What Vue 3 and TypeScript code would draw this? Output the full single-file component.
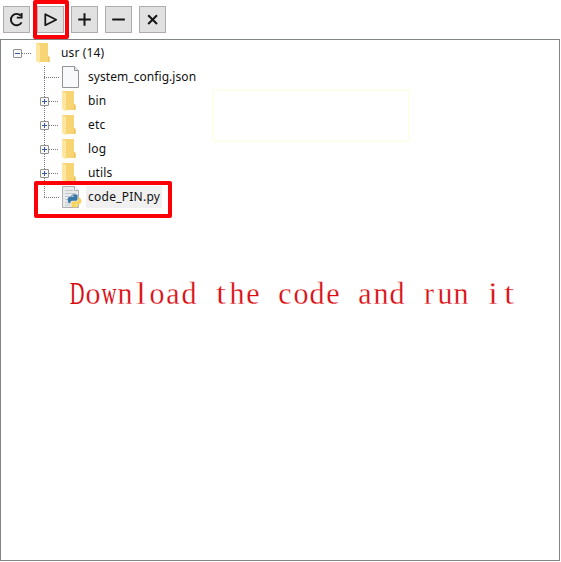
<script setup lang="ts">
interface Item {
  name: string
  kind: 'file' | 'folder' | 'python'
}

const tools = ['reload', 'run', 'add', 'remove', 'close']
const note = [...'Download the code and run it']
const items: Item[] = [
  { name: 'system_config.json', kind: 'file' },
  { name: 'bin', kind: 'folder' },
  { name: 'etc', kind: 'folder' },
  { name: 'log', kind: 'folder' },
  { name: 'utils', kind: 'folder' },
  { name: 'code_PIN.py', kind: 'python' },
]
</script>

<template>
  <main class="window">
    <header class="toolbar">
      <button v-for="tool in tools" :key="tool" class="tool" :aria-label="tool">
        <svg viewBox="0 0 25 25" width="25" height="25">
          <g v-if="tool === 'reload'" fill="none" stroke="#161616" stroke-width="1.9">
            <path d="M17.600 15.400A5.700 5.700 0 1 1 16.800 8.700" />
            <path d="M17.600 6v4.600h-4.800" />
          </g>
          <path v-else-if="tool === 'run'" d="M7.300 7.200v11L18.200 12.700z" fill="none" stroke="#161616" stroke-width="1.800" stroke-linejoin="round" />
          <path v-else-if="tool === 'add'" d="M6.200 12.500h12.600M12.500 6.200v12.600" stroke="#161616" stroke-width="2" />
          <path v-else-if="tool === 'remove'" d="M6.200 12.500h12.600" stroke="#161616" stroke-width="2" />
          <path v-else d="M8.200 8.200l8.800 8.800M17 8.200l-8.800 8.800" stroke="#161616" stroke-width="2" />
        </svg>
        <span v-if="tool === 'run'" class="mark mark-run"></span>
      </button>
    </header>

    <section class="panel">
      <div class="row root">
        <svg class="toggle" viewBox="0 0 9 9" width="9" height="9">
          <rect x=".5" y=".5" width="8" height="8" rx=".5" fill="#f7f7f8" stroke="#919191" />
          <path d="M2 4.500h5" stroke="#3d579b" />
        </svg>
        <span class="dots root-dots"></span>
        <svg class="folder" viewBox="0 0 16 22" width="16" height="22">
          <path d="M1 1h12v13l1.500 1v5H5L1 18z" fill="#f7d575" />
          <path d="M13 14l1.500 1v5H13z" fill="#efc459" />
          <path d="M1 1l4 2v18.500L1 19z" fill="#ffe7a2" />
        </svg>
        <span class="label">usr (14)</span>
      </div>

      <div
        v-for="(item, index) in items"
        :key="item.name"
        class="row child"
        :class="{ last: index === items.length - 1 }"
      >
        <span class="branch">
          <svg v-if="item.kind === 'folder'" class="plus" viewBox="0 0 9 9" width="9" height="9">
            <rect x=".5" y=".5" width="8" height="8" rx=".5" fill="#f7f7f8" stroke="#919191" />
            <path d="M2 4.500h5M4.500 2v5" stroke="#3d579b" />
          </svg>
        </span>
        <span class="dots child-dots" :class="{ leaf: item.kind !== 'folder' }"></span>
        <span class="icon">
          <svg v-if="item.kind === 'folder'" viewBox="0 0 22 22" width="22" height="22">
            <path d="M2 1h12v13l1.500 1v5H6L2 18z" fill="#f7d575" />
            <path d="M14 14l1.500 1v5H14z" fill="#efc459" />
            <path d="M2 1l4 2v18.500L2 19z" fill="#ffe7a2" />
          </svg>
          <svg v-else-if="item.kind === 'file'" viewBox="0 0 22 22" width="22" height="22">
            <path d="M2.500.500h12l4 4v17h-16z" fill="#f8f9fa" stroke="#909294" />
            <path d="M14.500.500v4h4" fill="#e9ebed" stroke="#909294" />
          </svg>
          <svg v-else viewBox="0 0 22 22" width="22" height="22">
            <path d="M2.500.500h12l4 4v17h-16z" fill="#e8eaeb" stroke="#adafb1" />
            <path d="M14.500.500v4h4" fill="#fff" stroke="#adafb1" />
            <path d="M5 4.500h8M5 7.500h11M5 10.500h10M5 13.500h5M5 16.500h4M5 19h5" stroke="#c4c6c8" />
            <path d="M11.500 9q3.200-1.300 6 0v4.200q0 1.500-1.500 1.500h-4q-1.800 0-1.800 2.600H8.800q-2.800-6 1-6.600h4.700v-.5h-3z" fill="#3977a8" />
            <path d="M18.300 11.700h1.700q3.200 5-1 6.800h-4.500v.5H18v1.700q-3.300 1.600-6.500 0v-4q0-1.300 1.500-1.300h3.500q1.800 0 1.800-1.700z" fill="#f6d35b" />
            <circle cx="12.700" cy="9.900" r=".6" fill="#e7f1f8" />
            <circle cx="16.700" cy="20" r=".5" fill="#fff" />
          </svg>
        </span>
        <span class="label" :class="{ selected: item.kind === 'python', long: item.kind === 'file' }">{{ item.name }}</span>
        <span v-if="item.kind === 'python'" class="mark mark-file"></span>
      </div>

      <p class="note"><span v-for="(letter, index) in note" :key="index" class="letter" :class="{ wide: letter === 'D' || letter === 'w', slim: 'ilt'.includes(letter) }">{{ letter }}</span></p>
      <span class="faint"></span>
    </section>
  </main>
</template>

<style>
body {
  background: #fff;
}
</style>

<style scoped>
.window {
  box-sizing: border-box;
  width: 561px;
  height: 562px;
  overflow: hidden;
  padding-right: 1px;
  font-family: "Noto Sans", "Open Sans", sans-serif;
  color: #111;
}
.toolbar {
  display: flex;
  height: 39px;
  box-sizing: border-box;
  padding: 6px 3px;
  gap: 7px;
}
.tool {
  position: relative;
  box-sizing: border-box;
  width: 27px;
  height: 27px;
  padding: 0;
  border: 1px solid #adadad;
  background: #e1e1e1;
}
.tool svg {
  display: block;
}
.mark {
  position: absolute;
  box-sizing: border-box;
  border: 4px solid #fb0007;
  border-radius: 2px;
  z-index: 2;
}
.mark-run {
  left: -5px;
  top: -7px;
  width: 36px;
  height: 39px;
}
.panel {
  position: relative;
  box-sizing: border-box;
  height: 522px;
  border: 1px solid #828587;
  padding-top: 1px;
}
.row {
  position: relative;
  display: flex;
  align-items: center;
  height: 24px;
}
.root {
  padding-left: 12px;
}
.dots {
  height: 1px;
  background: repeating-linear-gradient(90deg, #777 0 1px, transparent 1px 2px);
}
.root-dots {
  width: 10px;
}
.folder {
  margin-left: 3px;
}
.root .label {
  margin-left: 10px;
  letter-spacing: 0.15px;
}
.child {
  padding-left: 39px;
}
.branch {
  display: flex;
  align-items: center;
  width: 9px;
  height: 24px;
  background: repeating-linear-gradient(0deg, #777 0 1px, transparent 1px 2px) 4px 0 / 1px 100% no-repeat;
}
.last .branch {
  align-self: flex-start;
  background-size: 1px 12px;
}
.child-dots {
  width: 10px;
}
.child-dots.leaf {
  width: 15px;
  margin-left: -5px;
}
.icon {
  width: 22px;
  height: 22px;
  margin-left: 1px;
}
.icon svg {
  display: block;
}
.label {
  font-size: 12px;
  line-height: 22px;
  white-space: nowrap;
}
.child .label {
  margin-left: 4px;
  padding: 0 2px;
  letter-spacing: 0.15px;
}
.child .long {
  letter-spacing: 0.06px;
}
.child .selected {
  background: #f0f0f0;
  letter-spacing: 0.25px;
}
.mark-file {
  left: 33px;
  top: -4px;
  width: 138px;
  height: 37px;
}
.note {
  display: flex;
  margin: 67px 0 0 68px;
  font-family: "Liberation Serif", serif;
  font-size: 30px;
  line-height: 34px;
  color: #d80d12;
  transform: scaleY(1.07);
}
.letter {
  display: flex;
  justify-content: center;
  width: 16px;
  height: 34px;
  white-space: pre;
  -webkit-text-stroke: 0.25px #fff;
}
.wide {
  transform: scaleX(0.68);
  -webkit-text-stroke-width: 0;
}
.slim {
  transform: scaleX(1.2);
  -webkit-text-stroke-width: 0.35px;
}
.faint {
  position: absolute;
  left: 211px;
  top: 49px;
  width: 194px;
  height: 49px;
  border: 2px solid #fffeed;
}
</style>
